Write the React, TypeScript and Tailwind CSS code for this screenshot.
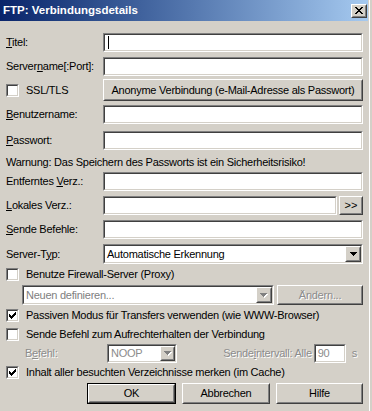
import React from 'react';

const CHECK = [
  '......X',
  '.....XX',
  'X...XXX',
  'XX.XXX.',
  'XXXXX..',
  '.XXX...',
  '..X....',
];
const ARROW = ['XXXXXXX', '.XXXXX.', '..XXX..', '...X...'];
const CLOSE = [
  'XX....XX',
  '.XX..XX.',
  '..XXXX..',
  '...XX...',
  '..XXXX..',
  '.XX..XX.',
  'XX....XX',
];

function Pix({ rows, color, shadow }: { rows: string[]; color: string; shadow?: string }) {
  const w = rows[0].length + (shadow ? 1 : 0);
  const h = rows.length + (shadow ? 1 : 0);
  const rects: React.ReactNode[] = [];
  if (shadow) {
    rows.forEach((r, y) =>
      r.split('').forEach((c, x) => {
        if (c === 'X') rects.push(<rect key={`s${x}-${y}`} x={x + 1} y={y + 1} width={1} height={1} fill={shadow} />);
      })
    );
  }
  rows.forEach((r, y) =>
    r.split('').forEach((c, x) => {
      if (c === 'X') rects.push(<rect key={`p${x}-${y}`} x={x} y={y} width={1} height={1} fill={color} />);
    })
  );
  return (
    <svg width={w} height={h} shapeRendering="crispEdges" className="block">
      {rects}
    </svg>
  );
}

function Sunken({ className = '', bg = 'bg-white', children }: { className?: string; bg?: string; children?: React.ReactNode }) {
  return (
    <div className={`border border-t-[#808080] border-l-[#808080] border-b-white border-r-white ${className}`}>
      <div className={`h-full w-full border border-t-[#404040] border-l-[#404040] border-b-[#d4d0c8] border-r-[#d4d0c8] ${bg}`}>
        {children}
      </div>
    </div>
  );
}

function Raised({ className = '', children }: { className?: string; children?: React.ReactNode }) {
  return (
    <div className={`shrink-0 border border-t-white border-l-white border-b-[#404040] border-r-[#404040] bg-[#d4d0c8] ${className}`}>
      <div className="flex h-full w-full items-center justify-center border border-t-[#d4d0c8] border-l-[#d4d0c8] border-b-[#808080] border-r-[#808080]">
        {children}
      </div>
    </div>
  );
}

function Check({ checked }: { checked?: boolean }) {
  return (
    <Sunken className="h-[13px] w-[13px] shrink-0">
      <div className="flex h-full w-full items-center justify-center">{checked && <Pix rows={CHECK} color="#000" />}</div>
    </Sunken>
  );
}

function Label({ children }: { children: React.ReactNode }) {
  return <span className="w-[97px] shrink-0 whitespace-nowrap">{children}</span>;
}

function Field({ className = 'w-[260px]', children }: { className?: string; children?: React.ReactNode }) {
  return (
    <Sunken className={`h-[19px] shrink-0 ${className}`}>
      <div className="flex h-full items-center pl-[2px]">{children}</div>
    </Sunken>
  );
}

function CheckRow({ checked, text, className }: { checked?: boolean; text: string; className: string }) {
  return (
    <div className={`flex h-[13px] items-center ${className}`}>
      <Check checked={checked} />
      <span className="ml-[7px] whitespace-nowrap">{text}</span>
    </div>
  );
}

const DIS = 'text-[#8c8c8c] [text-shadow:1px_1px_0_#ffffff]';

export default function App() {
  return (
    <div className="flex h-[411px] w-[372px] overflow-hidden bg-[#d4d0c8] font-['Liberation_Sans',Arial,sans-serif] text-[11px] leading-none tracking-[-0.25px] text-black">
      <div className="flex w-[369px] flex-col">
        {/* Title bar */}
        <div className="flex h-[21px] w-[368px] shrink-0 items-center justify-between bg-gradient-to-r from-[#0a246a] to-[#a6caf0] pl-[3px] pr-[1px]">
          <span className="text-[11.5px] font-bold tracking-normal text-white">FTP: Verbindungsdetails</span>
          <Raised className="h-[14px] w-[16px]">
            <Pix rows={CLOSE} color="#000" />
          </Raised>
        </div>

        <div className="flex flex-col pl-[6px] pr-[6px]">
          <div className="mt-[12px] flex h-[19px] items-center">
            <Label>
              <u>T</u>itel:
            </Label>
            <Field>
              <div className="ml-[1px] h-[13px] w-[1px] bg-black" />
            </Field>
          </div>

          <div className="mt-[5px] flex h-[19px] items-center">
            <Label>
              Server<u>n</u>ame[:Port]:
            </Label>
            <Field />
          </div>

          <div className="mt-[3px] flex h-[22px] items-center">
            <div className="flex w-[97px] shrink-0 items-center">
              <Check />
              <span className="ml-[7px]">SSL/TLS</span>
            </div>
            <Raised className="h-[22px] w-[260px]">
              <span className="whitespace-nowrap">Anonyme Verbindung (e-Mail-Adresse als Passwort)</span>
            </Raised>
          </div>

          <div className="mt-[4px] flex h-[19px] items-center">
            <Label>
              <u>B</u>enutzername:
            </Label>
            <Field />
          </div>

          <div className="mt-[7px] flex h-[19px] items-center">
            <Label>
              <u>P</u>asswort:
            </Label>
            <Field />
          </div>

          <div className="mt-[5px] flex h-[14px] items-center whitespace-nowrap">
            Warnung: Das Speichern des Passworts ist ein Sicherheitsrisiko!
          </div>

          <div className="mt-[3px] flex h-[19px] items-center">
            <Label>
              Entferntes <u>V</u>erz.:
            </Label>
            <Field />
          </div>

          <div className="mt-[5px] flex h-[19px] items-center">
            <Label>
              <u>L</u>okales Verz.:
            </Label>
            <Field className="w-[234px]" />
            <Raised className="ml-[2px] h-[19px] w-[24px]">
              <span className="tracking-normal">&gt;&gt;</span>
            </Raised>
          </div>

          <div className="mt-[5px] flex h-[19px] items-center">
            <Label>
              <u>S</u>ende Befehle:
            </Label>
            <Field />
          </div>

          <div className="mt-[5px] flex h-[20px] items-center">
            <Label>
              Server-T<u>y</u>p:
            </Label>
            <Sunken className="h-[20px] w-[260px] shrink-0">
              <div className="flex h-full items-center">
                <span className="flex-1 whitespace-nowrap pl-[2px]">Automatische Erkennung</span>
                <Raised className="h-full w-[16px]">
                  <Pix rows={ARROW} color="#000" />
                </Raised>
              </div>
            </Sunken>
          </div>

          <CheckRow className="mt-[4px]" text="Benutze Firewall-Server (Proxy)" />

          <div className="mt-[4px] flex h-[20px] items-center">
            <Sunken className="ml-[16px] h-[20px] w-[252px] shrink-0">
              <div className="flex h-full items-center">
                <span className="flex-1 whitespace-nowrap pl-[2px] text-[#808080]">Neuen definieren...</span>
                <Raised className="h-full w-[16px]">
                  <Pix rows={ARROW} color="#808080" shadow="#ffffff" />
                </Raised>
              </div>
            </Sunken>
            <Raised className="ml-[3px] h-[20px] w-[86px]">
              <span className={DIS}>Ändern...</span>
            </Raised>
          </div>

          <CheckRow className="mt-[4px]" checked text="Passiven Modus für Transfers verwenden (wie WWW-Browser)" />
          <CheckRow className="mt-[6px]" text="Sende Befehl zum Aufrechterhalten der Verbindung" />

          <div className="mt-[3px] flex h-[19px] items-center">
            <span className={`ml-[19px] w-[82px] shrink-0 ${DIS}`}>
              B<u>e</u>fehl:
            </span>
            <Sunken className="h-[19px] w-[70px] shrink-0">
              <div className="flex h-full items-center">
                <span className={`flex-1 pl-[2px] ${DIS}`}>NOOP</span>
                <Raised className="h-full w-[15px]">
                  <Pix rows={ARROW} color="#808080" shadow="#ffffff" />
                </Raised>
              </div>
            </Sunken>
            <div className="flex-1" />
            <span className={`whitespace-nowrap ${DIS}`}>
              Sende<u>i</u>ntervall: Alle
            </span>
            <Sunken className="ml-[2px] h-[19px] w-[32px] shrink-0">
              <div className="flex h-full items-center pl-[2px]">
                <span className={DIS}>90</span>
              </div>
            </Sunken>
            <span className={`ml-[6px] mr-[6px] ${DIS}`}>s</span>
          </div>

          <CheckRow className="mt-[3px]" checked text="Inhalt aller besuchten Verzeichnisse merken (im Cache)" />

          <div className="mt-[4px] flex h-[21px] items-center">
            <div className="ml-[81px] h-[21px] w-[89px] shrink-0 border border-black">
              <Raised className="h-full w-full">
                <span>OK</span>
              </Raised>
            </div>
            <Raised className="ml-[6px] h-[21px] w-[88px]">
              <span>Abbrechen</span>
            </Raised>
            <Raised className="ml-[6px] h-[21px] w-[87px]">
              <span>Hilfe</span>
            </Raised>
          </div>
        </div>
      </div>
      <div className="w-[1px] bg-white" />
      <div className="w-[2px] bg-[#d4d0c8]" />
    </div>
  );
}
